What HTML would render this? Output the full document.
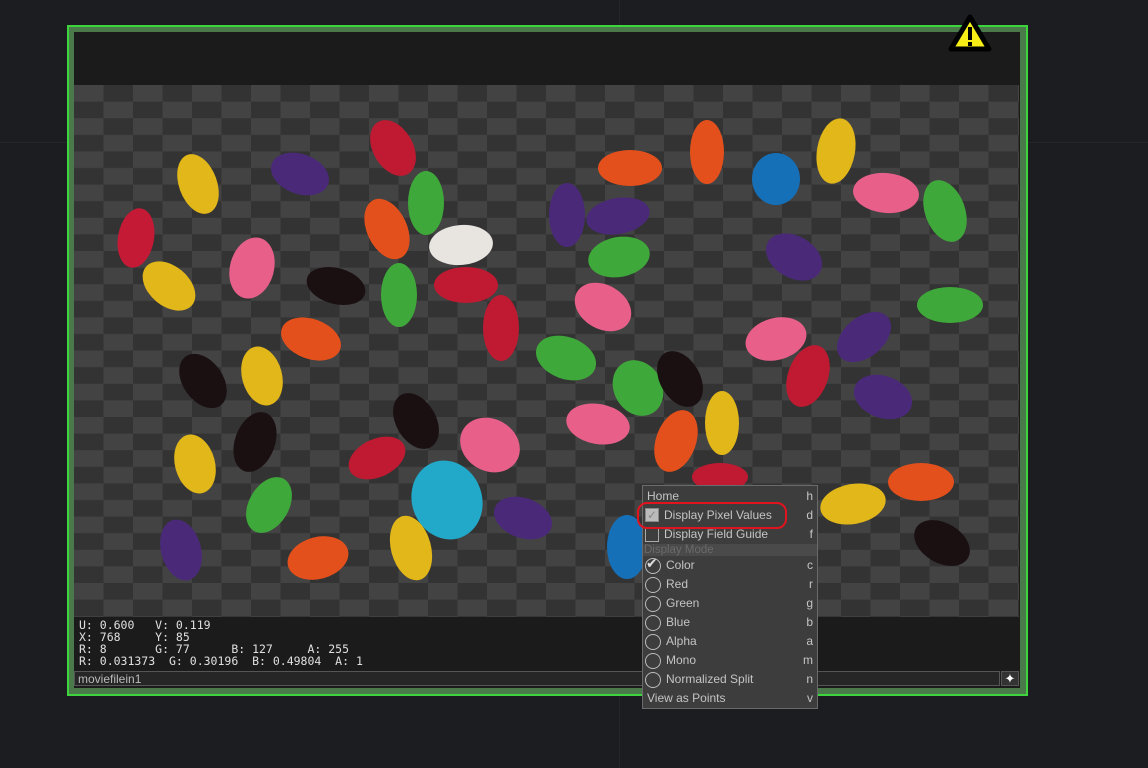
<!DOCTYPE html>
<html><head><style>
body{margin:0;width:1148px;height:768px;background:#1c1d21;position:relative;overflow:hidden;font-family:"Liberation Sans","DejaVu Sans",sans-serif}
.abs{position:absolute}
.menu{left:642px;top:485px;width:174px;height:222px;background:#3d3d3d;border:1px solid #6a6a6a;color:#c4c4c4;font-size:12px}
.it{position:absolute;left:0;width:174px;height:19px;line-height:19px}
.it .k{position:absolute;right:4px;top:0}
.it .l{position:absolute;left:23px}
.rad{position:absolute;left:2px;top:2px;width:14px;height:14px;border:1px solid #bbb;border-radius:50%}
pre{margin:0;font-family:"DejaVu Sans Mono","Liberation Mono",monospace;font-size:11.5px;line-height:12px;color:#e0e0e0}
</style></head><body>
<div class="abs" style="left:619px;top:0;width:1px;height:768px;background:#25262a"></div>
<div class="abs" style="left:0;top:142px;width:1148px;height:1px;background:#25262a"></div>
<div class="abs" style="left:67px;top:25px;width:957px;height:667px;border:2px solid #3ed43e;background:#4a7a4a"></div>
<div class="abs" style="left:74px;top:32px;width:946px;height:656px;background:#1b1b1b"></div>
<svg class="abs" style="left:74px;top:85px" width="945" height="532">
<defs><pattern id="c" width="59" height="33.2" patternUnits="userSpaceOnUse"><rect width="59" height="33.2" fill="#333333"/><rect width="29.5" height="16.6" fill="#434343"/><rect x="29.5" y="16.6" width="29.5" height="16.6" fill="#434343"/></pattern></defs>
<rect width="945" height="532" fill="url(#c)"/>
<g transform="translate(-74,-85)">
<ellipse cx="198" cy="184" rx="19" ry="31" transform="rotate(-20 198 184)" fill="#e2b719"/>
<ellipse cx="300" cy="174" rx="30" ry="20" transform="rotate(20 300 174)" fill="#4a2a78"/>
<ellipse cx="393" cy="148" rx="20" ry="30" transform="rotate(-30 393 148)" fill="#c01a32"/>
<ellipse cx="426" cy="203" rx="18" ry="32" fill="#3fa83a"/>
<ellipse cx="387" cy="229" rx="20" ry="32" transform="rotate(-25 387 229)" fill="#e4501c"/>
<ellipse cx="461" cy="245" rx="32" ry="20" transform="rotate(-5 461 245)" fill="#e8e4e0"/>
<ellipse cx="136" cy="238" rx="18" ry="30" transform="rotate(10 136 238)" fill="#c51a35"/>
<ellipse cx="169" cy="286" rx="30" ry="20" transform="rotate(40 169 286)" fill="#e2b719"/>
<ellipse cx="252" cy="268" rx="22" ry="31" transform="rotate(15 252 268)" fill="#e8608a"/>
<ellipse cx="336" cy="286" rx="30" ry="18" transform="rotate(15 336 286)" fill="#1a1012"/>
<ellipse cx="399" cy="295" rx="18" ry="32" fill="#3fa83a"/>
<ellipse cx="466" cy="285" rx="32" ry="18" fill="#c01a32"/>
<ellipse cx="501" cy="328" rx="18" ry="33" fill="#c01a32"/>
<ellipse cx="311" cy="339" rx="31" ry="20" transform="rotate(20 311 339)" fill="#e4501c"/>
<ellipse cx="203" cy="381" rx="30" ry="20" transform="rotate(55 203 381)" fill="#1a1012"/>
<ellipse cx="262" cy="376" rx="20" ry="30" transform="rotate(-15 262 376)" fill="#e2b719"/>
<ellipse cx="255" cy="442" rx="20" ry="31" transform="rotate(20 255 442)" fill="#1a1012"/>
<ellipse cx="195" cy="464" rx="20" ry="30" transform="rotate(-15 195 464)" fill="#e2b719"/>
<ellipse cx="269" cy="505" rx="20" ry="30" transform="rotate(30 269 505)" fill="#3fa83a"/>
<ellipse cx="181" cy="550" rx="20" ry="31" transform="rotate(-15 181 550)" fill="#4a2a78"/>
<ellipse cx="318" cy="558" rx="31" ry="21" transform="rotate(-15 318 558)" fill="#e4501c"/>
<ellipse cx="416" cy="421" rx="20" ry="30" transform="rotate(-30 416 421)" fill="#1a1012"/>
<ellipse cx="377" cy="458" rx="30" ry="19" transform="rotate(-25 377 458)" fill="#c01a32"/>
<ellipse cx="490" cy="445" rx="31" ry="26" transform="rotate(30 490 445)" fill="#e8608a"/>
<ellipse cx="447" cy="500" rx="35" ry="40" transform="rotate(-20 447 500)" fill="#22a8c8"/>
<ellipse cx="411" cy="548" rx="20" ry="33" transform="rotate(-15 411 548)" fill="#e2b719"/>
<ellipse cx="523" cy="518" rx="30" ry="20" transform="rotate(20 523 518)" fill="#4a2a78"/>
<ellipse cx="567" cy="215" rx="18" ry="32" fill="#4a2a78"/>
<ellipse cx="618" cy="216" rx="32" ry="18" transform="rotate(-10 618 216)" fill="#4a2a78"/>
<ellipse cx="630" cy="168" rx="32" ry="18" fill="#e4501c"/>
<ellipse cx="619" cy="257" rx="31" ry="20" transform="rotate(-10 619 257)" fill="#3fa83a"/>
<ellipse cx="603" cy="307" rx="30" ry="22" transform="rotate(30 603 307)" fill="#e8608a"/>
<ellipse cx="566" cy="358" rx="31" ry="21" transform="rotate(20 566 358)" fill="#3fa83a"/>
<ellipse cx="638" cy="388" rx="24" ry="29" transform="rotate(-30 638 388)" fill="#3fa83a"/>
<ellipse cx="680" cy="379" rx="20" ry="30" transform="rotate(-30 680 379)" fill="#1a1012"/>
<ellipse cx="707" cy="152" rx="17" ry="32" fill="#e4501c"/>
<ellipse cx="776" cy="179" rx="24" ry="26" fill="#1670b8"/>
<ellipse cx="836" cy="151" rx="19" ry="33" transform="rotate(10 836 151)" fill="#e2b719"/>
<ellipse cx="886" cy="193" rx="33" ry="20" transform="rotate(5 886 193)" fill="#e8608a"/>
<ellipse cx="945" cy="211" rx="20" ry="32" transform="rotate(-20 945 211)" fill="#3fa83a"/>
<ellipse cx="794" cy="257" rx="30" ry="21" transform="rotate(30 794 257)" fill="#4a2a78"/>
<ellipse cx="950" cy="305" rx="33" ry="18" fill="#3fa83a"/>
<ellipse cx="776" cy="339" rx="31" ry="21" transform="rotate(-15 776 339)" fill="#e8608a"/>
<ellipse cx="808" cy="376" rx="20" ry="32" transform="rotate(20 808 376)" fill="#c01a32"/>
<ellipse cx="864" cy="337" rx="20" ry="31" transform="rotate(50 864 337)" fill="#4a2a78"/>
<ellipse cx="883" cy="397" rx="30" ry="21" transform="rotate(20 883 397)" fill="#4a2a78"/>
<ellipse cx="598" cy="424" rx="32" ry="20" transform="rotate(10 598 424)" fill="#e8608a"/>
<ellipse cx="676" cy="441" rx="20" ry="32" transform="rotate(20 676 441)" fill="#e4501c"/>
<ellipse cx="722" cy="423" rx="17" ry="32" fill="#e2b719"/>
<ellipse cx="720" cy="477" rx="28" ry="14" fill="#c01a32"/>
<ellipse cx="853" cy="504" rx="33" ry="20" transform="rotate(-10 853 504)" fill="#e2b719"/>
<ellipse cx="921" cy="482" rx="33" ry="19" fill="#e4501c"/>
<ellipse cx="942" cy="543" rx="30" ry="20" transform="rotate(30 942 543)" fill="#1a1012"/>
<ellipse cx="627" cy="547" rx="20" ry="32" fill="#1670b8"/>
</g></svg>
<pre class="abs" style="left:79px;top:619px">U: 0.600   V: 0.119
X: 768     Y: 85
R: 8       G: 77      B: 127     A: 255
R: 0.031373  G: 0.30196  B: 0.49804  A: 1</pre>
<div class="abs" style="left:74px;top:671px;height:15px;background:#262626;border:1px solid #555;color:#bbb;font-size:12px;line-height:15px;padding-left:3px;box-sizing:border-box;width:926px">moviefilein1</div>
<div class="abs" style="left:1001px;top:671px;width:18px;height:15px;background:#333;border:1px solid #555;box-sizing:border-box;color:#fff;font-size:13px;line-height:13px;text-align:center">✦</div>
<svg class="abs" style="left:946px;top:12px" width="48" height="44"><path d="M24 5 L43 37 L5 37 Z" fill="#f5ed15" stroke="#000" stroke-width="5" stroke-linejoin="round"/><rect x="22" y="15" width="4" height="13" fill="#000"/><rect x="22" y="30" width="4" height="4" fill="#000"/></svg>
<div class="abs menu">
<div class="it" style="top:1px"><span style="position:absolute;left:4px">Home</span><span class="k">h</span></div>
<div class="it" style="top:20px"><div style="position:absolute;left:2px;top:2px;width:14px;height:14px;background:#bbb;border:1px solid #888;box-sizing:border-box;color:#888;font-size:12px;line-height:13px;text-align:center">✓</div><span class="l" style="left:21px">Display Pixel Values</span><span class="k">d</span></div>
<div class="it" style="top:39px"><div style="position:absolute;left:2px;top:3px;width:14px;height:14px;border:1px solid #aaa;box-sizing:border-box"></div><span class="l" style="left:21px">Display Field Guide</span><span class="k">f</span></div>
<div class="it" style="top:58px;height:12px;line-height:12px;background:#4a4a4a;color:#6a6a6a;font-size:11.5px"><span style="position:absolute;left:1px">Display Mode</span></div>
<div class="it" style="top:70px"><div class="rad"></div><span style="position:absolute;left:3px;top:-2px;font-size:14px;color:#ddd">✔</span><span class="l">Color</span><span class="k">c</span></div>
<div class="it" style="top:89px"><div class="rad"></div><span class="l">Red</span><span class="k">r</span></div>
<div class="it" style="top:108px"><div class="rad"></div><span class="l">Green</span><span class="k">g</span></div>
<div class="it" style="top:127px"><div class="rad"></div><span class="l">Blue</span><span class="k">b</span></div>
<div class="it" style="top:146px"><div class="rad"></div><span class="l">Alpha</span><span class="k">a</span></div>
<div class="it" style="top:165px"><div class="rad"></div><span class="l">Mono</span><span class="k">m</span></div>
<div class="it" style="top:184px"><div class="rad"></div><span class="l">Normalized Split</span><span class="k">n</span></div>
<div class="it" style="top:203px"><span style="position:absolute;left:4px">View as Points</span><span class="k">v</span></div>
</div>
<div class="abs" style="left:637px;top:502px;width:146px;height:23px;border:2.5px solid #e0141e;border-radius:10px"></div>
</body></html>
